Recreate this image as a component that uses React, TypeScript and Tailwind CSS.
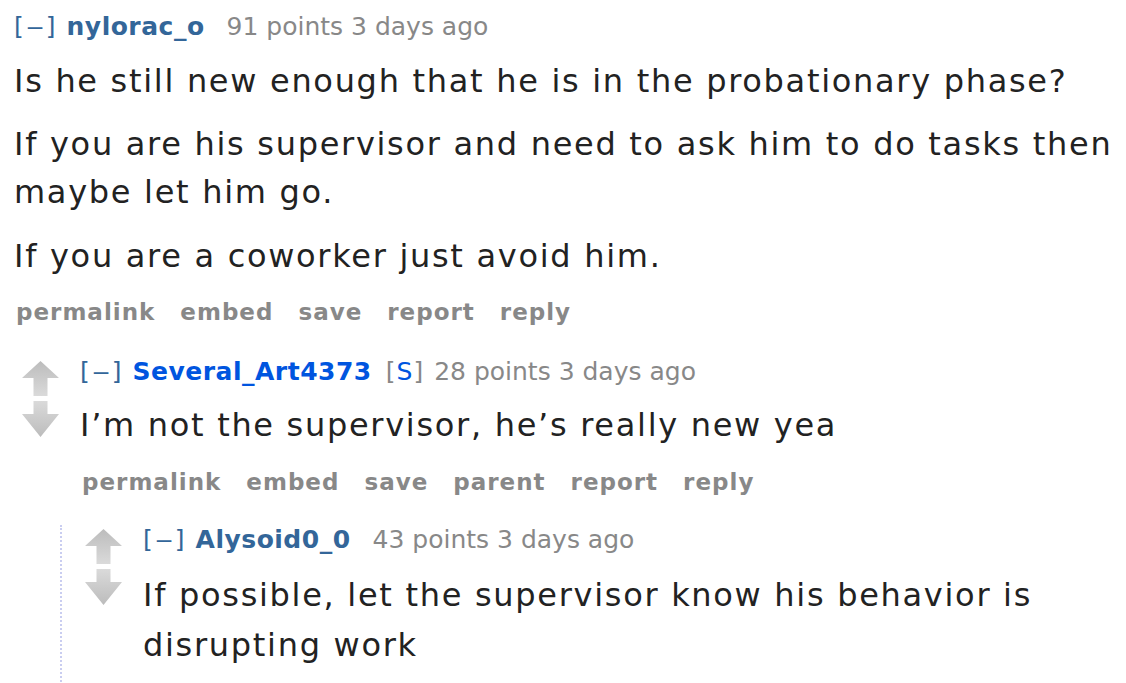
import React from "react";

const font = { fontFamily: '"DejaVu Sans", Verdana, sans-serif' };

function Arrows() {
  return (
    <div className="flex w-[37px] shrink-0 flex-col items-center pt-[4px]">
      <svg width="37" height="35" viewBox="0 0 37 35">
        <defs>
          <linearGradient id="up" x1="0" y1="0" x2="0" y2="1">
            <stop offset="0" stopColor="#bcbcbc" />
            <stop offset="1" stopColor="#dadada" />
          </linearGradient>
        </defs>
        <path d="M18.5 0 L37 17 L25.5 17 L25.5 35 L11.5 35 L11.5 17 L0 17 Z" fill="url(#up)" />
      </svg>
      <svg className="mt-[5px]" width="37" height="36" viewBox="0 0 37 36">
        <defs>
          <linearGradient id="down" x1="0" y1="0" x2="0" y2="1">
            <stop offset="0" stopColor="#dadada" />
            <stop offset="1" stopColor="#bcbcbc" />
          </linearGradient>
        </defs>
        <path d="M11.5 0 L25.5 0 L25.5 13 L37 13 L18.5 36 L0 13 L11.5 13 Z" fill="url(#down)" />
      </svg>
    </div>
  );
}

function Buttons({ items, top }: { items: string[]; top: string }) {
  return (
    <div
      className={
        "flex gap-[25px] pl-[2px] text-[23px] font-bold leading-[30px] tracking-[1px] text-[#888] " +
        top
      }
    >
      {items.map((b) => (
        <span key={b}>{b}</span>
      ))}
    </div>
  );
}

function Tagline({
  author,
  points,
  submitter,
}: {
  author: string;
  points: string;
  submitter?: boolean;
}) {
  return (
    <div className="flex items-baseline text-[25px] leading-[30px] text-[#888]">
      <span className="text-[#369]">
        [<span className="inline-block w-[22px] scale-x-[1.45] text-center">–</span>]
      </span>
      <span
        className={
          "ml-[11px] font-bold tracking-[0.5px] " +
          (submitter ? "text-[#0055df]" : "text-[#369]")
        }
      >
        {author}
      </span>
      {submitter && (
        <span className="ml-[14px] tracking-[1px]">
          [<span className="text-[#0055df]">S</span>]
        </span>
      )}
      <span className={submitter ? "ml-[10px]" : "ml-[22px]"}>
        {points} points 3 days ago
      </span>
    </div>
  );
}

const body = "text-[32px] tracking-[1.7px] text-[#222]";

export default function App() {
  return (
    <div className="min-h-[683px] w-[1126px] overflow-hidden bg-white pt-[12px]" style={font}>
      <div className="pl-[14px]">
        <Tagline author="nylorac_o" points="91" />
        <div className={"mt-[15px] leading-[48px] " + body}>
          <p>Is he still new enough that he is in the probationary phase?</p>
          <p className="mt-[15px]">
            If you are his supervisor and need to ask him to do tasks then
            <br />
            maybe let him go.
          </p>
          <p className="mt-[16px]">If you are a coworker just avoid him.</p>
        </div>
        <Buttons top="mt-[17px]" items={["permalink", "embed", "save", "report", "reply"]} />
      </div>

      <div className="mt-[30px] flex pl-[22px]">
        <Arrows />
        <div className="ml-[21px] flex-1">
          <Tagline author="Several_Art4373" points="28" submitter />
          <div className={"mt-[14px] leading-[48px] " + body}>
            <p>I’m not the supervisor, he’s really new yea</p>
          </div>
          <Buttons
            top="mt-[18px]"
            items={["permalink", "embed", "save", "parent", "report", "reply"]}
          />
        </div>
      </div>

      <div className="ml-[60px] mt-[28px] flex border-l-2 border-dotted border-[#c9cdf0] pb-[20px] pl-[23px]">
        <Arrows />
        <div className="ml-[21px] flex-1">
          <Tagline author="Alysoid0_0" points="43" />
          <div className={"mt-[15px] leading-[50px] " + body}>
            <p>
              If possible, let the supervisor know his behavior is
              <br />
              disrupting work
            </p>
          </div>
        </div>
      </div>
    </div>
  );
}
